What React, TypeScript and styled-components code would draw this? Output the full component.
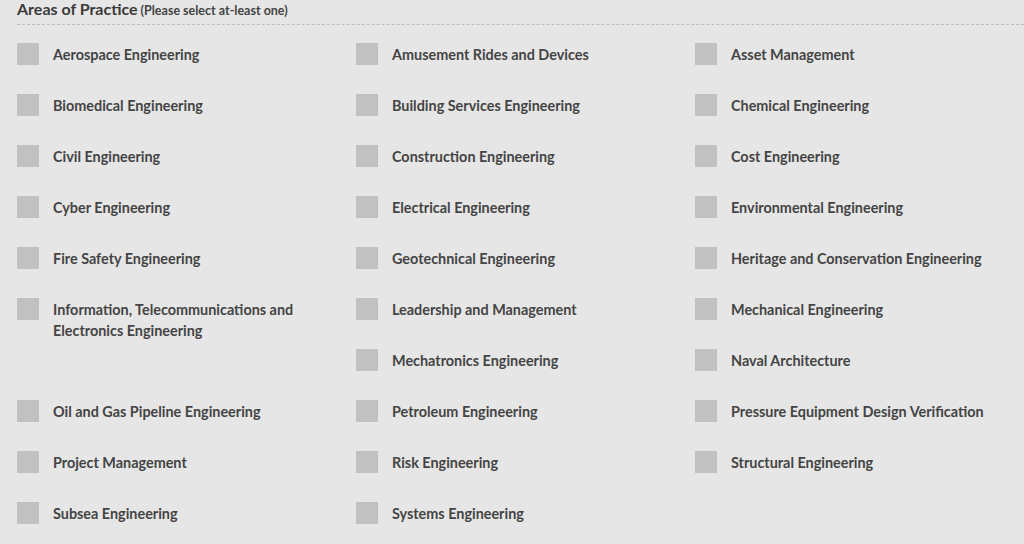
import styled, { createGlobalStyle } from "styled-components"

const GlobalStyle = createGlobalStyle`
    html, body {
        margin: 0;
        padding: 0;
        background-color: #e6e6e6;
    }
    body {
        font-family: Lato, "Open Sans", sans-serif;
        color: #444444;
    }
`

const Wrapper = styled.div`
    width: 1024px;
    height: 544px;
    overflow: hidden;
    box-sizing: border-box;
    padding-left: 17px;
    background-color: #e6e6e6;
`

const Header = styled.div`
    height: 25px;
    border-bottom: 1px dashed #bdbdbd;
    display: flex;
    align-items: baseline;
    gap: 3px;
    box-sizing: border-box;
`

const Title = styled.h2`
    margin: 0;
    font-size: 16px;
    line-height: 17px;
    font-weight: 700;
    color: #3a3a3a;
`

const Hint = styled.span`
    font-size: 12.5px;
    font-weight: 700;
    color: #444444;
`

const OptionGrid = styled.ul`
    list-style: none;
    margin: 18px 0 0 0;
    padding: 0;
    display: grid;
    grid-template-columns: repeat(3, 339px);
    grid-auto-rows: 51px;
`

const Option = styled.li<{ tall?: boolean }>`
    display: flex;
    align-items: flex-start;
    gap: 14px;
    grid-row: ${props => (props.tall ? "span 2" : "span 1")};
`

const Box = styled.span`
    flex: none;
    width: 22px;
    height: 22px;
    background-color: #c1c1c1;
`

const Label = styled.span`
    padding-top: 1px;
    font-size: 14.4px;
    line-height: 21px;
    font-weight: 700;
    color: #444444;
    max-width: 260px;
`

const areas = [
    "Aerospace Engineering",
    "Amusement Rides and Devices",
    "Asset Management",
    "Biomedical Engineering",
    "Building Services Engineering",
    "Chemical Engineering",
    "Civil Engineering",
    "Construction Engineering",
    "Cost Engineering",
    "Cyber Engineering",
    "Electrical Engineering",
    "Environmental Engineering",
    "Fire Safety Engineering",
    "Geotechnical Engineering",
    "Heritage and Conservation Engineering",
    "Information, Telecommunications and Electronics Engineering",
    "Leadership and Management",
    "Mechanical Engineering",
    "Mechatronics Engineering",
    "Naval Architecture",
    "Oil and Gas Pipeline Engineering",
    "Petroleum Engineering",
    "Pressure Equipment Design Verification",
    "Project Management",
    "Risk Engineering",
    "Structural Engineering",
    "Subsea Engineering",
    "Systems Engineering",
]

export default function App() {
    return (
        <>
            <GlobalStyle />
            <Wrapper>
                <Header>
                    <Title>Areas of Practice</Title>
                    <Hint>(Please select at-least one)</Hint>
                </Header>
                <OptionGrid>
                    {areas.map(v => (
                        <Option key={v} tall={v.startsWith("Information")}>
                            <Box />
                            <Label>{v}</Label>
                        </Option>
                    ))}
                </OptionGrid>
            </Wrapper>
        </>
    )
}
